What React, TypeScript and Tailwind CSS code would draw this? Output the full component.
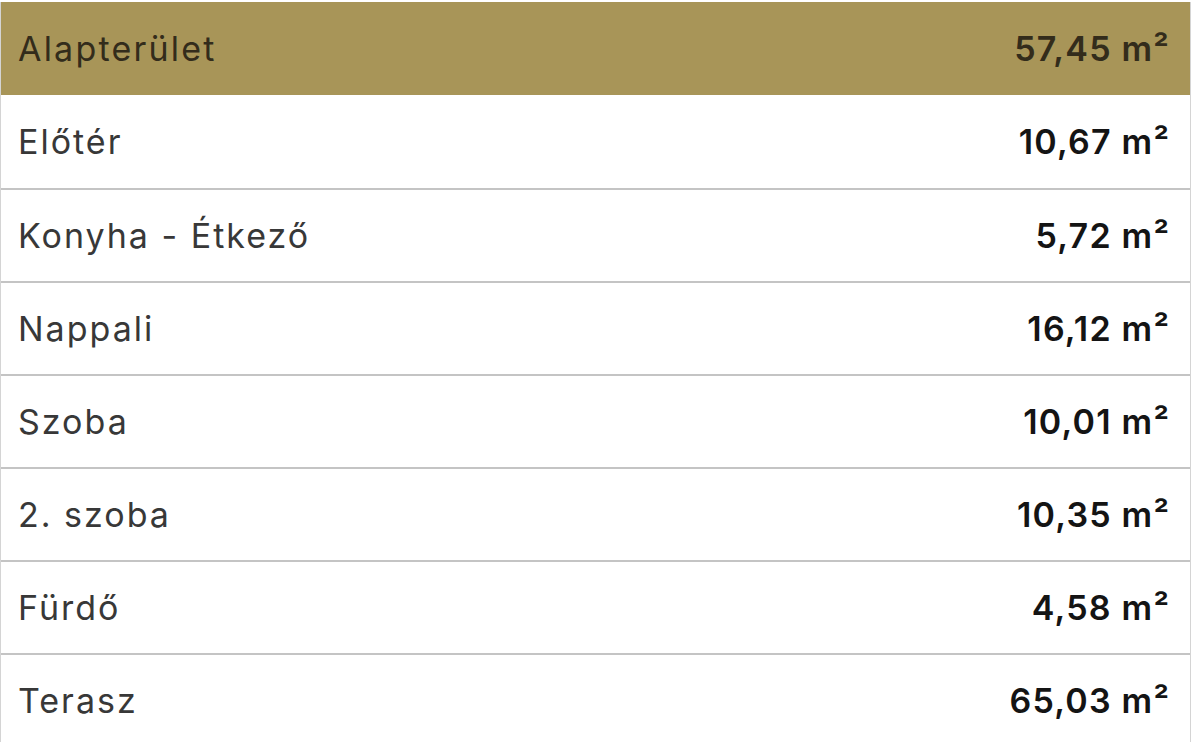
import React from "react";

const rows: [string, string][] = [
  ["Előtér", "10,67"],
  ["Konyha - Étkező", "5,72"],
  ["Nappali", "16,12"],
  ["Szoba", "10,01"],
  ["2. szoba", "10,35"],
  ["Fürdő", "4,58"],
  ["Terasz", "65,03"],
];

export default function App() {
  return (
    <div
      className="w-[1200px] h-[742px] bg-white pt-[2px] overflow-hidden"
      style={{ fontFamily: "Inter, 'Noto Sans', sans-serif" }}
    >
      <div className="w-[1191px] border-r border-l border-[#d4d4d4]">
        <div className="h-[93px] bg-[#a89558] flex items-center justify-between pl-[17px] pr-[20px] text-[34px] text-[#332c1b]">
          <span className="tracking-[2.2px]">Alapterület</span>
          <span className="font-semibold tracking-[1.2px]">57,45 m²</span>
        </div>
        {rows.map(([label, value], i) => (
          <div
            key={label}
            className={`h-[93px] flex items-center justify-between pl-[17px] pr-[20px] text-[34px] ${
              i > 0 ? "border-t-2 border-[#c4c4c4]" : ""
            }`}
          >
            <span className="text-[#383838] tracking-[2px]">{label}</span>
            <span className="text-[#141414] font-semibold tracking-[1.2px]">{value} m²</span>
          </div>
        ))}
      </div>
    </div>
  );
}
